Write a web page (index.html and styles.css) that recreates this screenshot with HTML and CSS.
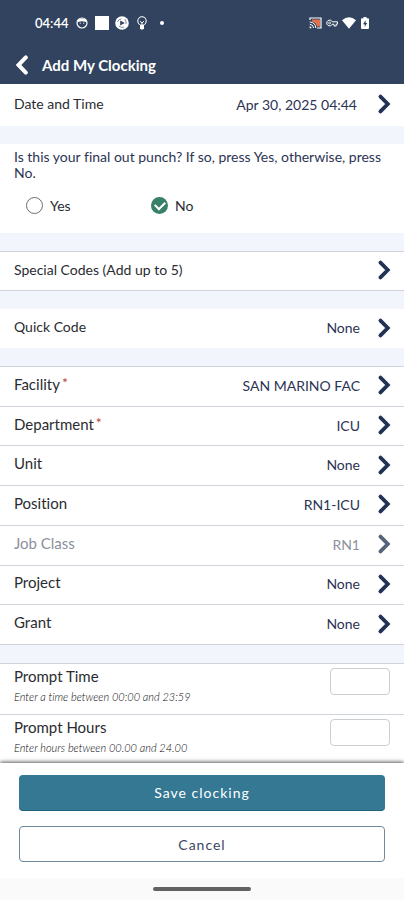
FILE: index.html
```html
<!DOCTYPE html>
<html lang="en">
<head>
<meta charset="utf-8">
<meta name="viewport" content="width=device-width, initial-scale=1">
<title>Add My Clocking</title>
<link rel="stylesheet" href="styles.css">
</head>
<body>
<svg class="sprite" aria-hidden="true">
  <symbol id="chevron" viewBox="0 0 14 20"><path d="M3.500 2.600 10.800 10 3.500 17.400" fill="none" stroke="currentColor" stroke-width="3.800" stroke-linecap="round"/></symbol>
</svg>
<header class="top">
  <div class="status">
    <span class="clock">04:44</span>
    <svg class="face" viewBox="0 0 12 12"><circle cx="6" cy="6" r="5" fill="none" stroke="#fff" stroke-width="1.2"/><path d="M1.5 3.2Q6 0 10.5 3.2L9.7 5Q6 3.6 2.3 5Z" fill="#fff"/><path d="M3.8 6.2h1M7.2 6.2h1" stroke="#fff"/></svg>
    <span class="square"></span>
    <svg class="swirl" viewBox="0 0 14 14"><circle cx="7" cy="7" r="6.8" fill="#fff"/><path d="M5.200 4.600v4.800l4.600-2.400Z" fill="#31435e"/><path d="M6.500 2.800Q3.500 3.200 2.400 6M11 8Q11.600 5 9.800 3M4 10Q6 12 9 11.200" fill="none" stroke="#31435e" stroke-width=".6"/></svg>
    <svg class="bulb" viewBox="0 0 10 14"><circle cx="5" cy="5" r="4.2" fill="none" stroke="#fff" stroke-width="1.1"/><path d="M3 5.2 5 7l2-1.8M5 7v3" fill="none" stroke="#fff" stroke-width="1"/><path d="M3 9h4v3.2L6 13.4H4L3 12.2Z" fill="#fff"/></svg>
    <span class="dot"></span>
    <span class="system">
      <svg class="cast" viewBox="0 0 13 12"><path d="M3 2.5h8v7H8Q7 5.5 3 4.5Z" fill="#e0714e"/><path d="M1 3V1h11v10H8" fill="none" stroke="#fff" stroke-width="1.2"/><path d="M.8 5Q6.5 5.4 6.8 11M.8 7.3Q4.4 7.6 4.6 11" fill="none" stroke="#fff" stroke-width="1"/><path d="M.6 9.2Q2.4 9.4 2.6 11.2H.6Z" fill="#fff"/></svg>
      <svg class="key" viewBox="0 0 12 8"><path d="M6.3 2.8A2.9 2.9 0 1 0 6.3 5.2H8V7h2.2V5.2h1.2V2.8Z" fill="none" stroke="#fff" stroke-width="1"/><circle cx="3.6" cy="4" r="1" fill="none" stroke="#fff" stroke-width=".8"/></svg>
      <svg class="wifi" viewBox="0 0 14 12"><path d="M0 3.2Q7-2.6 14 3.2L7 11.8Z" fill="#fff"/></svg>
      <svg class="battery" viewBox="0 0 8 12"><path d="M2.5 0h3v1.2H7q1 0 1 1V11q0 1-1 1H1q-1 0-1-1V2.2q0-1 1-1h1.500Z" fill="#fff"/><path d="M4.600 3.200 2 7.300h1.700v2.700L6.200 6H4.600Z" fill="#31435e"/></svg>
    </span>
  </div>
  <div class="titlebar">
    <button class="back" type="button" aria-label="Back"><svg viewBox="0 0 14 20"><path d="M10.800 2.400 3.500 10l7.300 7.600" fill="none" stroke="#fff" stroke-width="4" stroke-linecap="round"/></svg></button>
    <h1>Add My Clocking</h1>
  </div>
</header>
<main>
  <section class="group plain">
    <button class="row" type="button"><span class="label">Date and Time</span><span class="value date">Apr 30, 2025 04:44</span><svg class="chev"><use href="#chevron"/></svg></button>
  </section>
  <fieldset class="question">
    <legend>Is this your final out punch? If so, press Yes, otherwise, press No.</legend>
    <div class="options">
      <label><input type="radio" name="final"><span>Yes</span></label>
      <label><input type="radio" name="final" checked><span>No</span></label>
    </div>
  </fieldset>
  <section class="group">
    <button class="row" type="button"><span class="label">Special Codes (Add up to 5)</span><svg class="chev"><use href="#chevron"/></svg></button>
  </section>
  <section class="group plain">
    <button class="row" type="button"><span class="label">Quick Code</span><span class="value">None</span><svg class="chev"><use href="#chevron"/></svg></button>
  </section>
  <section class="group list">
    <button class="row" type="button"><span class="label">Facility<sup>*</sup></span><span class="value">SAN MARINO FAC</span><svg class="chev"><use href="#chevron"/></svg></button>
    <button class="row" type="button"><span class="label">Department<sup>*</sup></span><span class="value">ICU</span><svg class="chev"><use href="#chevron"/></svg></button>
    <button class="row" type="button"><span class="label">Unit</span><span class="value">None</span><svg class="chev"><use href="#chevron"/></svg></button>
    <button class="row" type="button"><span class="label">Position</span><span class="value">RN1-ICU</span><svg class="chev"><use href="#chevron"/></svg></button>
    <button class="row" type="button" disabled><span class="label">Job Class</span><span class="value">RN1</span><svg class="chev"><use href="#chevron"/></svg></button>
    <button class="row" type="button"><span class="label">Project</span><span class="value">None</span><svg class="chev"><use href="#chevron"/></svg></button>
    <button class="row" type="button"><span class="label">Grant</span><span class="value">None</span><svg class="chev"><use href="#chevron"/></svg></button>
  </section>
  <section class="group">
    <div class="prompt"><label for="ptime">Prompt Time<small>Enter a time between 00:00 and 23:59</small></label><input id="ptime" type="text"></div>
    <div class="prompt"><label for="phours">Prompt Hours<small>Enter hours between 00.00 and 24.00</small></label><input id="phours" type="text"></div>
  </section>
</main>
<footer>
  <button class="action save" type="button">Save clocking</button>
  <button class="action cancel" type="button">Cancel</button>
</footer>
<div class="nav"><span></span></div>
</body>
</html>
```
FILE: styles.css
```css
* { box-sizing: border-box; }

body {
  margin: 0;
  height: 100vh;
  display: flex;
  flex-direction: column;
  background: #f2f5fb;
  color: #2a2c31;
  font: 400 14px/17px Lato, "Open Sans", sans-serif;
  font-variant-ligatures: none;
}

button, input { font: inherit; font-variant-ligatures: none; color: inherit; }
svg { display: block; flex: none; }
.sprite { display: none; }

.top { flex: none; background: #31435e; color: #fff; }
.status { display: flex; align-items: center; height: 46px; padding: 0 35px; }
.clock { font-size: 13px; line-height: 16px; font-weight: 600; }
.face { width: 12px; height: 12px; margin-left: 8px; }
.square { width: 14px; height: 14px; margin-left: 7px; background: #fff; }
.swirl { width: 14px; height: 14px; margin-left: 6px; }
.bulb { width: 10px; height: 14px; margin-left: 8px; }
.dot { width: 4px; height: 4px; margin-left: 13px; border-radius: 50%; background: #fff; }
.system { display: flex; align-items: center; gap: 4px; margin-left: auto; }
.cast { width: 13px; height: 12px; }
.key { width: 12px; height: 8px; }
.wifi { width: 14px; height: 12px; }
.battery { width: 8px; height: 12px; margin-left: 1px; }

.titlebar { display: flex; align-items: center; height: 38px; padding: 0 15px; gap: 13px; }
.back { padding: 0; border: 0; background: none; }
.back svg { width: 14px; height: 20px; }
h1 { margin: 0; font-size: 15px; line-height: 18px; font-weight: 700; }

main {
  flex: 1;
  min-height: 0;
  display: flex;
  flex-direction: column;
  gap: 18px;
  overflow-y: auto;
  scrollbar-width: none;
}
main > * { flex: none; }

.group { background: #fff; border-top: 1px solid #d0d3da; }
.plain { border: 0; }
.row {
  display: flex;
  align-items: center;
  width: 100%;
  height: 39px;
  padding: 0 13px 2px 14px;
  border: 0;
  border-bottom: 1px solid #d0d3da;
  background: #fff;
  text-align: left;
}
.plain .row { border-bottom: 0; }
.plain:first-child .row { height: 42px; }
.label { flex: 1; padding-bottom: 2px; }
.value { color: #2c3455; margin-right: 17px; }
.date { margin-right: 20px; }
.chev { width: 14px; height: 20px; color: #203354; }
.row:disabled .label, .row:disabled .value { color: #8b909d; }
.row:disabled .chev { color: #56647b; }
sup { margin-left: 2px; color: #b8443c; font-size: 14px; line-height: 0; vertical-align: 2px; }

.list { display: grid; grid-auto-rows: 1fr; min-height: 279px; }
.list .row { height: auto; }
.list .label, .prompt label { font-size: 15px; }

.question { margin: 0; min-width: 0; padding: 5px 14px 18px; border: 0; background: #fff; }
legend { float: left; padding: 0; color: #2c3455; line-height: 16px; }
.options { clear: both; display: flex; padding: 14px 12px 0; }
.options label { display: flex; align-items: center; width: 125px; height: 20px; gap: 7px; }
.options input {
  appearance: none;
  flex: none;
  width: 17px;
  height: 17px;
  margin: 0;
  border: 1px solid #686c73;
  border-radius: 50%;
  display: grid;
  place-items: center;
}
.options input:checked { border: 0; background: #388067; }
.options input:checked::after {
  content: "";
  width: 8px;
  height: 5px;
  margin-bottom: 2px;
  border: solid #fff;
  border-width: 0 0 2px 2px;
  rotate: -45deg;
}

.prompt {
  display: flex;
  justify-content: space-between;
  align-items: flex-start;
  height: 51px;
  padding: 4px 14px 0;
  border-bottom: 1px solid #d0d3da;
}
.prompt small { display: block; margin-top: 4px; font-size: 11px; line-height: 15px; font-weight: 300; font-style: italic; color: #08090c; }
.prompt input { width: 60px; height: 27px; padding: 0 6px; border: 1px solid #cbced3; border-radius: 4px; background: #fff; }

footer {
  flex: none;
  position: relative;
  display: flex;
  flex-direction: column;
  gap: 15px;
  padding: 12px 19px 16px;
  background: #fff;
  box-shadow: 0 -1px 4px rgba(0, 0, 0, .65);
}
.action { height: 36px; padding: 0; border-radius: 4px; letter-spacing: 1px; }
.save { border: 0; border-bottom: 1px solid #20657f; background: #357893; color: #fff; }
.cancel { border: 1px solid #71899d; background: #fff; color: #3c4662; }

.nav { flex: none; display: flex; justify-content: center; align-items: center; height: 22px; position: relative; background: #fafafa; }
.nav span { width: 98px; height: 4px; border-radius: 2px; background: #626262; }
```
